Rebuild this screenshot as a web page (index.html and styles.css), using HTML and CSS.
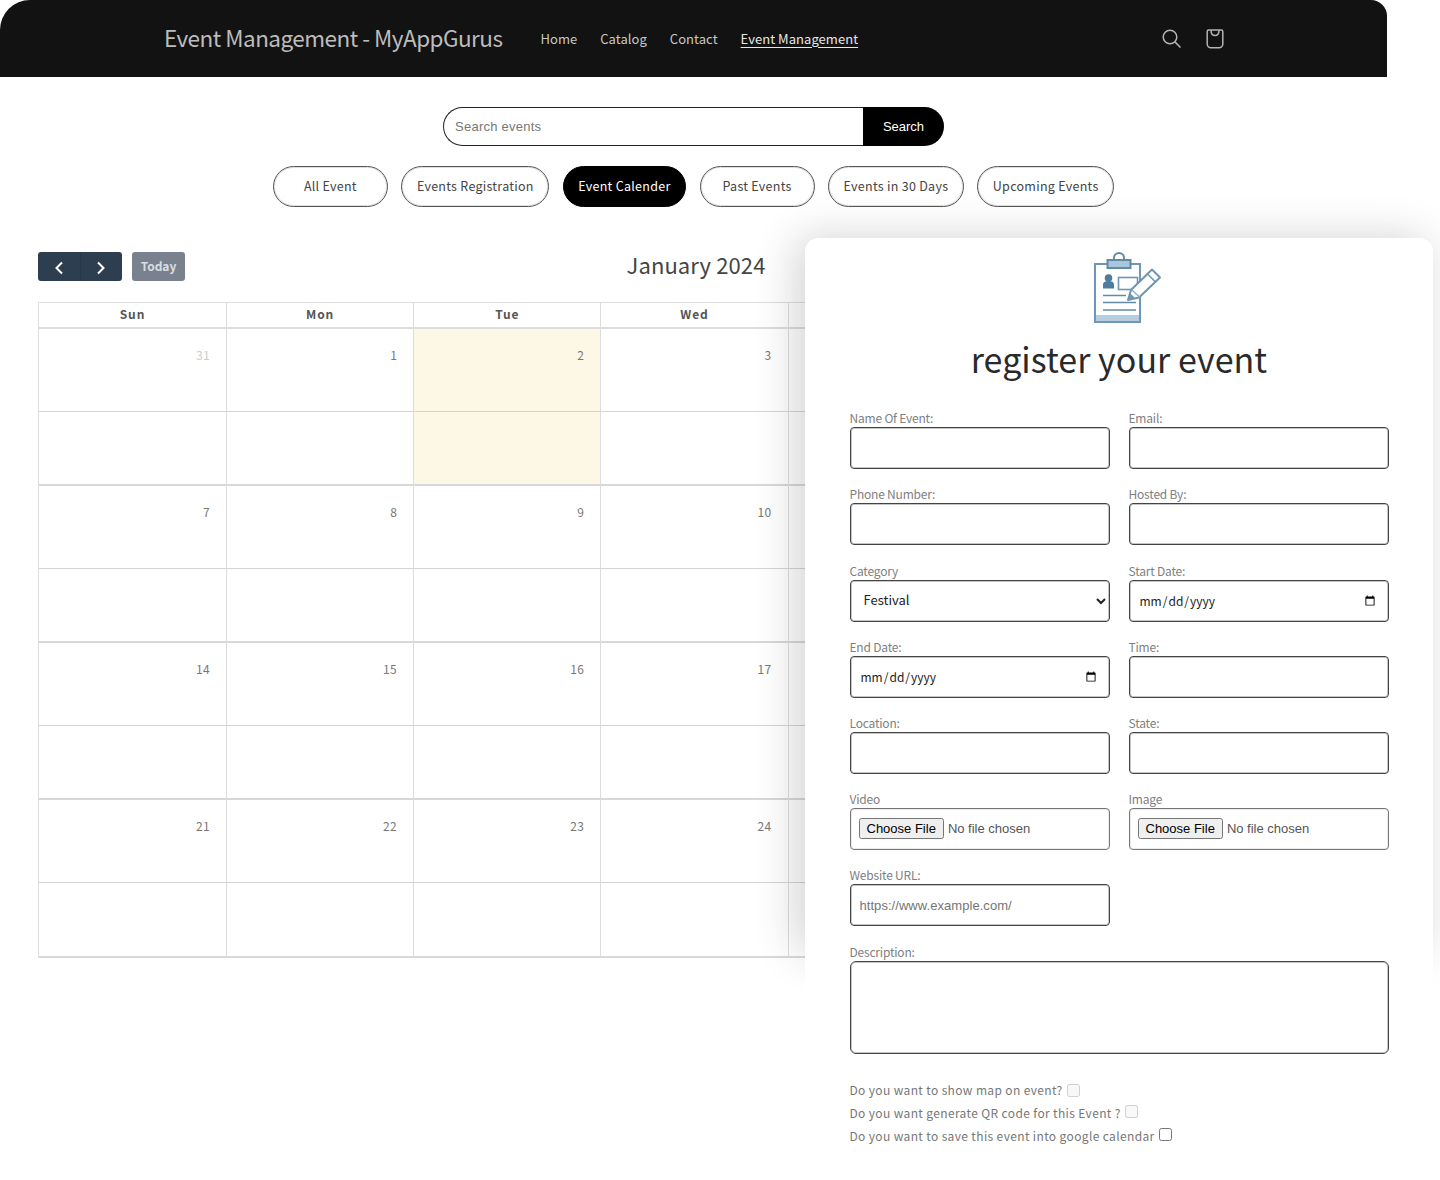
FILE: index.html
```html
<!DOCTYPE html>
<html lang="en">
<head>
<meta charset="utf-8">
<title>Event Management - MyAppGurus</title>
<link rel="stylesheet" href="styles.css">
</head>
<body>
<div class="page">
  <header class="site-header">
    <a class="brand">Event Management - MyAppGurus</a>
    <nav class="nav">
      <a>Home</a><a>Catalog</a><a>Contact</a><a class="current">Event Management</a>
    </nav>
    <div class="header-icons">
      <svg class="icon-search" width="22" height="22" viewBox="0 0 22 22" fill="none" stroke="currentColor" stroke-width="1.5"><circle cx="9" cy="9" r="6.8"/><path d="M13.9 13.9 19.5 19.5"/></svg>
      <svg class="icon-bag" width="22" height="22" viewBox="0 0 22 22" fill="none" stroke="currentColor" stroke-width="1.5" stroke-linejoin="round"><path d="M3.2 3.4C3.2 2.6 3.8 2 4.6 2h12.8c.8 0 1.400.6 1.400 1.400V16c0 2.200-1.700 3.800-3.800 3.800H7C4.900 19.800 3.200 18.200 3.200 16Z"/><path d="M7 2c0 3.600 1.500 5.600 4 5.600S15 5.600 15 2"/></svg>
    </div>
  </header>

  <main class="content">
    <form class="search">
      <input class="search-input" type="text" placeholder="Search events">
      <button class="search-btn" type="button">Search</button>
    </form>

    <div class="tabs">
      <a class="tab">All Event</a>
      <a class="tab">Events Registration</a>
      <a class="tab active">Event Calender</a>
      <a class="tab">Past Events</a>
      <a class="tab">Events in 30 Days</a>
      <a class="tab">Upcoming Events</a>
    </div>

    <section class="calendar">
      <div class="cal-toolbar">
        <div class="cal-controls">
          <div class="cal-nav">
            <button type="button" class="cal-arrow"><svg width="10" height="14" viewBox="0 0 10 14" fill="none" stroke="currentColor" stroke-width="2"><path d="M8 1.500 2.500 7 8 12.500"/></svg></button>
            <button type="button" class="cal-arrow"><svg width="10" height="14" viewBox="0 0 10 14" fill="none" stroke="currentColor" stroke-width="2"><path d="M2 1.500 7.500 7 2 12.500"/></svg></button>
          </div>
          <button type="button" class="cal-today">Today</button>
        </div>
        <h2 class="cal-title">January 2024</h2>
        <div class="cal-end"></div>
      </div>

      <div class="cal-grid">
        <div class="cal-head">Sun</div><div class="cal-head">Mon</div><div class="cal-head">Tue</div><div class="cal-head">Wed</div><div class="cal-head"></div><div class="cal-head"></div><div class="cal-head"></div>

        <div class="cal-day muted">31</div><div class="cal-day">1</div><div class="cal-day today">2</div><div class="cal-day">3</div><div class="cal-day"></div><div class="cal-day"></div><div class="cal-day"></div>
        <div class="cal-slot"></div><div class="cal-slot"></div><div class="cal-slot today"></div><div class="cal-slot"></div><div class="cal-slot"></div><div class="cal-slot"></div><div class="cal-slot"></div>

        <div class="cal-day">7</div><div class="cal-day">8</div><div class="cal-day">9</div><div class="cal-day">10</div><div class="cal-day"></div><div class="cal-day"></div><div class="cal-day"></div>
        <div class="cal-slot"></div><div class="cal-slot"></div><div class="cal-slot"></div><div class="cal-slot"></div><div class="cal-slot"></div><div class="cal-slot"></div><div class="cal-slot"></div>

        <div class="cal-day">14</div><div class="cal-day">15</div><div class="cal-day">16</div><div class="cal-day">17</div><div class="cal-day"></div><div class="cal-day"></div><div class="cal-day"></div>
        <div class="cal-slot"></div><div class="cal-slot"></div><div class="cal-slot"></div><div class="cal-slot"></div><div class="cal-slot"></div><div class="cal-slot"></div><div class="cal-slot"></div>

        <div class="cal-day">21</div><div class="cal-day">22</div><div class="cal-day">23</div><div class="cal-day">24</div><div class="cal-day"></div><div class="cal-day"></div><div class="cal-day"></div>
        <div class="cal-slot"></div><div class="cal-slot"></div><div class="cal-slot"></div><div class="cal-slot"></div><div class="cal-slot"></div><div class="cal-slot"></div><div class="cal-slot"></div>
      </div>
    </section>
  </main>

  <aside class="register">
    <svg class="register-icon" width="85" height="85" viewBox="0 0 85 85" fill="none">
      <rect x="10" y="19" width="45" height="58" fill="#fff" stroke="#6f96b3" stroke-width="2"/>
      <rect x="11" y="70" width="43" height="6" fill="#b4cde0"/>
      <rect x="22.500" y="15" width="23" height="8" fill="#a9c6db" stroke="#5f8aa8" stroke-width="2"/>
      <path d="M29 15v-2a5 5 0 0 1 10 0v2" stroke="#5f8aa8" stroke-width="2"/>
      <circle cx="23.500" cy="33" r="3.800" fill="#4f7c9c"/>
      <path d="M18 43.500v-4c0-2.500 2.500-3.500 5.500-3.500s5.500 1 5.500 3.500v4Z" fill="#4f7c9c"/>
      <rect x="33.500" y="32.500" width="19" height="12" stroke="#6f96b3" stroke-width="1.600"/>
      <path d="M18 50.500h23M18 57.500h33M18 65h33" stroke="#5f8aa8" stroke-width="1.600"/>
      <path d="M43 55 46 45 67 24.500 75 32.500 54 52.500Z" fill="#fff" stroke="#6f96b3" stroke-width="2" stroke-linejoin="round"/>
      <path d="M43 55 45 48 50 53Z" fill="#6f96b3"/>
      <path d="M62.500 29 70.500 37" stroke="#6f96b3" stroke-width="1.600"/>
      <path d="M47 45 54.500 52" stroke="#8fb0c7" stroke-width="1.400"/>
    </svg>
    <h1 class="register-title">register your event</h1>

    <form class="register-form">
      <label class="field"><span class="field-label">Name Of Event:</span><input class="control" type="text"></label>
      <label class="field"><span class="field-label">Email:</span><input class="control" type="email"></label>
      <label class="field"><span class="field-label">Phone Number:</span><input class="control" type="tel"></label>
      <label class="field"><span class="field-label">Hosted By:</span><input class="control" type="text"></label>
      <label class="field"><span class="field-label">Category</span><select class="control control-select"><option>Festival</option></select></label>
      <label class="field"><span class="field-label">Start Date:</span><input class="control control-date" type="date"></label>
      <label class="field"><span class="field-label">End Date:</span><input class="control control-date" type="date"></label>
      <label class="field"><span class="field-label">Time:</span><input class="control" type="text"></label>
      <label class="field"><span class="field-label">Location:</span><input class="control" type="text"></label>
      <label class="field"><span class="field-label">State:</span><input class="control" type="text"></label>
      <label class="field"><span class="field-label">Video</span><input class="control control-file" type="file"></label>
      <label class="field"><span class="field-label">Image</span><input class="control control-file" type="file"></label>
      <label class="field"><span class="field-label">Website URL:</span><input class="control control-url" type="url" placeholder="https://www.example.com/"></label>
      <div class="field"></div>
      <label class="field field-wide"><span class="field-label">Description:</span><textarea class="control control-area"></textarea></label>
    </form>

    <div class="checks">
      <label class="check">Do you want to show map on event? <input type="checkbox" disabled></label>
      <label class="check">Do you want generate QR code for this Event ? <input class="raised" type="checkbox" disabled></label>
      <label class="check">Do you want to save this event into google calendar <input class="raised" type="checkbox"></label>
    </div>
  </aside>
</div>
</body>
</html>
```

FILE: styles.css
```css
* { box-sizing: border-box; }

html, body { margin: 0; padding: 0; }

body {
  background: #fff;
  font-family: "Noto Sans CJK JP", "Noto Sans", sans-serif;
  color: #444;
}

.page {
  position: relative;
  width: 1440px;
  height: 1180px;
  overflow: hidden;
  isolation: isolate;
}

/* Header */
.site-header {
  display: flex;
  align-items: center;
  width: 1387px;
  height: 77px;
  padding-left: 164px;
  background: #121212;
  border-radius: 30px 16px 0 0;
  color: #d0d0d0;
}

.brand {
  padding-bottom: 3px;
  font-size: 22.500px;
  line-height: 32px;
  letter-spacing: -0.52px;
  color: #bcbcbc;
  white-space: nowrap;
}

.nav {
  display: flex;
  gap: 23px;
  margin-left: 38px;
  font-size: 13px;
  line-height: 20px;
  letter-spacing: 0.05px;
  white-space: nowrap;
}

.nav a { color: #c8c8c8; }

.nav .current {
  color: #e6e6e6;
  text-decoration: underline;
  text-underline-offset: 3px;
}

.header-icons {
  display: flex;
  gap: 21px;
  align-items: center;
  margin-left: 303px;
  color: #b4b4b4;
}

/* Search */
.content {
  display: flex;
  flex-direction: column;
  align-items: center;
  width: 1387px;
}

.search {
  display: flex;
  width: 501px;
  height: 39px;
  margin-top: 30px;
}

.search-input {
  flex: 1;
  min-width: 0;
  padding: 0 11px;
  border: 1px solid #222;
  border-right: 0;
  border-radius: 20px 0 0 20px;
  background: #fff;
  outline: 0;
  font-family: "Liberation Sans", Arial, sans-serif;
  font-size: 13px;
  letter-spacing: 0.25px;
}

.search-input::placeholder { color: #777; }

.search-btn {
  width: 81px;
  border: 0;
  border-radius: 0 20px 20px 0;
  background: #000;
  color: #fff;
  font-family: "Liberation Sans", Arial, sans-serif;
  font-size: 13px;
}

/* Tabs */
.tabs {
  display: flex;
  gap: 13.500px;
  margin-top: 20px;
}

.tab {
  display: flex;
  align-items: center;
  justify-content: center;
  min-width: 115px;
  height: 41px;
  padding: 0 14.500px 3px;
  border: 1px solid #555;
  border-radius: 21px;
  box-shadow: inset 0 0 0 1px rgba(0, 0, 0, 0.12);
  font-size: 12.500px;
  letter-spacing: 0.28px;
  color: #444;
  white-space: nowrap;
}

.tab.active {
  background: #000;
  border-color: #000;
  color: #fff;
}

/* Calendar */
.calendar {
  align-self: flex-start;
  width: 1310px;
  margin: 45px 0 0 38px;
}

.cal-toolbar {
  display: flex;
  align-items: center;
  justify-content: space-between;
  height: 29px;
}

.cal-controls {
  display: flex;
  gap: 10px;
  width: 147px;
}

.cal-nav {
  display: flex;
  width: 84px;
  height: 29px;
  border-radius: 3px;
  overflow: hidden;
  background: #2c3e50;
}

.cal-arrow {
  flex: 1;
  display: flex;
  align-items: center;
  justify-content: center;
  padding: 2px 0 0;
  border: 0;
  background: none;
  color: #fff;
}

.cal-arrow + .cal-arrow { border-left: 1px solid #283849; }

.cal-today {
  width: 53px;
  height: 29px;
  padding: 0 0 2px;
  border: 0;
  border-radius: 3px;
  background: #78818d;
  color: #d9dde1;
  font-family: inherit;
  font-size: 12px;
  font-weight: 700;
}

.cal-title {
  margin: 0;
  padding-bottom: 6px;
  font-size: 22px;
  font-weight: 400;
  line-height: 30px;
  letter-spacing: 0.1px;
  color: #444;
}

.cal-end { width: 141px; }

.cal-grid {
  display: grid;
  grid-template-columns: 188px repeat(6, 187.200px);
  grid-template-rows: 26px repeat(3, 83px 74px) 83px 75px;
  margin-top: 21px;
  border-top: 1px solid #ddd;
  border-left: 1px solid #ddd;
}

.cal-head {
  padding-top: 1px;
  border-right: 1px solid #ddd;
  border-bottom: 2px solid #ddd;
  font-size: 12px;
  font-weight: 700;
  line-height: 20px;
  letter-spacing: 0.9px;
  text-align: center;
  color: #555;
}

.cal-day,
.cal-slot {
  border-right: 1px solid #ddd;
  border-bottom: 1px solid #d4d4d4;
}

.cal-slot { border-bottom: 2px solid #d8d8d8; }

.cal-day {
  padding: 17px 16px 0 0;
  font-size: 12px;
  line-height: 18px;
  letter-spacing: 0.4px;
  text-align: right;
  color: #777;
}

.cal-day.muted { color: #ccc; }

.today { background: #fdf8e6; }

/* Register panel */
.register {
  position: absolute;
  top: 238px;
  left: 805px;
  z-index: 1;
  width: 628px;
  height: 942px;
  padding: 7px 0 0 44.500px;
  background: #fff;
  border-radius: 14px 14px 0 0;
}

.register::before {
  content: "";
  position: absolute;
  z-index: -1;
  top: 0;
  left: 0;
  right: 0;
  height: 715px;
  border-radius: 14px;
  box-shadow: -8px 0 44px rgba(40, 30, 30, 0.2);
}

.register::after {
  content: "";
  position: absolute;
  z-index: -1;
  inset: 0;
  background: #fff;
  border-radius: 14px 14px 0 0;
}

.register-icon {
  display: block;
  margin-left: 235.500px;
}

.register-title {
  width: 539px;
  margin: 6px 0 0;
  font-size: 34px;
  font-weight: 400;
  line-height: 46px;
  letter-spacing: 0.05px;
  text-align: center;
  color: #2a2a2a;
}

.register-form {
  display: grid;
  grid-template-columns: 260px 260px;
  column-gap: 19px;
  row-gap: 19.200px;
  margin-top: 30.200px;
}

.field {
  display: flex;
  flex-direction: column;
}

.field-wide { grid-column: 1 / -1; }

.field-label {
  height: 15px;
  font-size: 12px;
  line-height: 12px;
  letter-spacing: -0.2px;
  color: #808080;
  white-space: nowrap;
}

.control {
  display: block;
  width: 100%;
  height: 42px;
  border: 1px solid #444;
  border-radius: 4px;
  background: #fff;
  box-shadow: inset 0 0 0 1px rgba(0, 0, 0, 0.22);
  outline: 0;
  font-family: inherit;
  color: #222;
}

.control-select {
  padding: 0 2px 2px 9px;
  font-size: 13px;
}

.control-date {
  padding: 0 10px 0 9px;
  font-size: 12px;
}

.control-file {
  padding: 9px 8px;
  border-color: #777;
  box-shadow: inset 0 0 0 1px rgba(0, 0, 0, 0.08);
  font-family: "Liberation Sans", Arial, sans-serif;
  font-size: 13px;
  color: #555;
}

.control-url {
  padding: 1px 9px 0;
  font-family: "Liberation Sans", Arial, sans-serif;
  font-size: 13px;
  letter-spacing: 0.05px;
}

.control-url::placeholder { color: #757575; }

.control-area {
  height: 93px;
  border-radius: 6px;
  resize: none;
}

.checks {
  display: flex;
  flex-direction: column;
  margin-top: 24.500px;
}

.check {
  height: 23px;
  font-size: 12px;
  line-height: 23px;
  letter-spacing: 0.36px;
  color: #777;
}

.check input {
  margin: 0 0 0 1px;
  vertical-align: -2px;
}

.check .raised { vertical-align: 0; }
```
